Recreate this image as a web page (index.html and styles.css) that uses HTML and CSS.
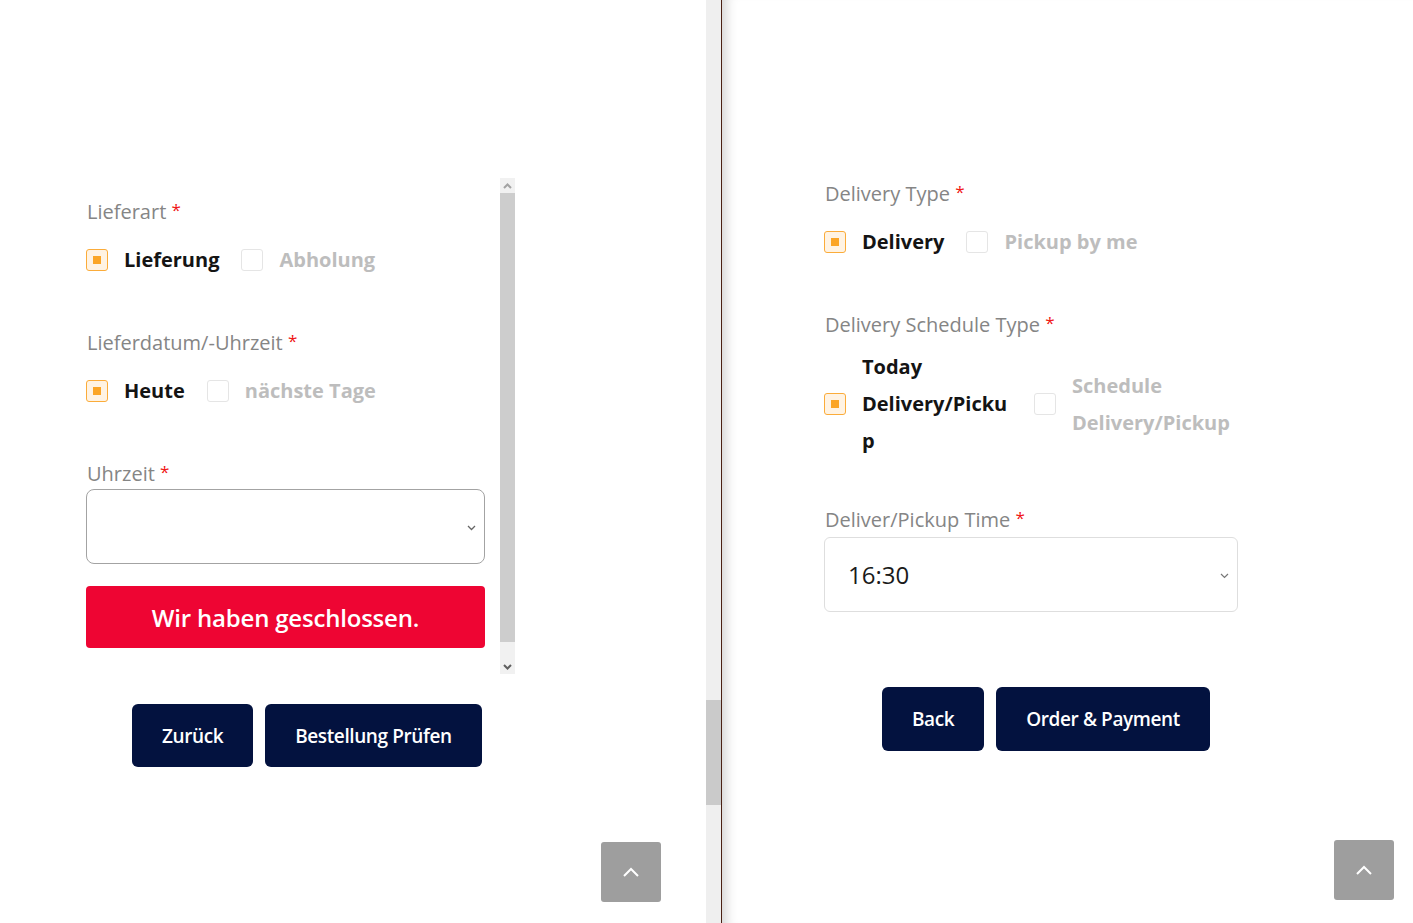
FILE: index.html
```html
<!DOCTYPE html>
<html lang="de">
<head>
    <meta charset="UTF-8">
    <title>Checkout</title>
    <link rel="stylesheet" href="styles.css">
</head>
<body>
    <div class="frame">
        <div class="pane pane-left">
            <div class="scrollbox">
                <div class="form">
                    <div class="field">
                        <div class="label">Lieferart <span class="req">*</span></div>
                        <div class="options">
                            <div class="option checked"><span class="box"></span><span class="text">Lieferung</span></div>
                            <div class="option"><span class="box"></span><span class="text">Abholung</span></div>
                        </div>
                    </div>
                    <div class="field">
                        <div class="label">Lieferdatum/-Uhrzeit <span class="req">*</span></div>
                        <div class="options">
                            <div class="option checked"><span class="box"></span><span class="text">Heute</span></div>
                            <div class="option"><span class="box"></span><span class="text">nächste Tage</span></div>
                        </div>
                    </div>
                    <div class="field field-select">
                        <div class="label">Uhrzeit <span class="req">*</span></div>
                        <div class="select select-dark">
                            <span class="value"></span>
                            <svg class="chev" width="9" height="6" viewBox="0 0 9 6"><path d="M1 1l3.5 3.5L8 1" fill="none" stroke="#666" stroke-width="1.3"/></svg>
                        </div>
                    </div>
                    <div class="closed">Wir haben geschlossen.</div>
                </div>
                <div class="vscroll">
                    <div class="arrow"><svg width="9" height="6" viewBox="0 0 9 6"><path d="M1 5l3.5-3.5L8 5" fill="none" stroke="#a3a3a3" stroke-width="2"/></svg></div>
                    <div class="thumb"></div>
                    <div class="track"></div>
                    <div class="arrow"><svg width="9" height="6" viewBox="0 0 9 6"><path d="M1 1l3.5 3.5L8 1" fill="none" stroke="#606060" stroke-width="2"/></svg></div>
                </div>
            </div>
            <div class="actions actions-left">
                <button class="btn">Zurück</button>
                <button class="btn">Bestellung Prüfen</button>
            </div>
            <button class="to-top to-top-left"><svg width="18" height="10" viewBox="0 0 18 10"><path d="M2 9l7-7 7 7" fill="none" stroke="#fff" stroke-width="2"/></svg></button>
        </div>

        <div class="page-scroll"><div class="page-thumb"></div></div>
        <div class="divider"></div>

        <div class="pane pane-right">
            <div class="form form-right">
                <div class="field">
                    <div class="label">Delivery Type <span class="req">*</span></div>
                    <div class="options">
                        <div class="option checked"><span class="box"></span><span class="text">Delivery</span></div>
                        <div class="option"><span class="box"></span><span class="text">Pickup by me</span></div>
                    </div>
                </div>
                <div class="field field-schedule">
                    <div class="label">Delivery Schedule Type <span class="req">*</span></div>
                    <div class="options options-tall">
                        <div class="option checked"><span class="box"></span><span class="text text-narrow">Today Delivery/Pickup</span></div>
                        <div class="option"><span class="box"></span><span class="text text-wide">Schedule Delivery/Pickup</span></div>
                    </div>
                </div>
                <div class="field field-select">
                    <div class="label">Deliver/Pickup Time <span class="req">*</span></div>
                    <div class="select select-light">
                        <span class="value">16:30</span>
                        <svg class="chev" width="9" height="6" viewBox="0 0 9 6"><path d="M1 1l3.5 3.5L8 1" fill="none" stroke="#777" stroke-width="1.2"/></svg>
                    </div>
                </div>
            </div>
            <div class="actions actions-right">
                <button class="btn">Back</button>
                <button class="btn">Order &amp; Payment</button>
            </div>
            <button class="to-top to-top-right"><svg width="18" height="10" viewBox="0 0 18 10"><path d="M2 9l7-7 7 7" fill="none" stroke="#fff" stroke-width="2"/></svg></button>
        </div>
    </div>
</body>
</html>
```

FILE: styles.css
```css
html, body {
    margin: 0;
    height: 100%;
    overflow: hidden;
}
body {
    font-family: 'Open Sans', 'Noto Sans', sans-serif;
    background: #fff;
    color: #111;
}
.frame {
    display: flex;
    height: 923px;
}
.pane {
    position: relative;
    height: 100%;
}
.pane-left {
    width: 706px;
    padding-top: 178px;
    box-sizing: border-box;
}
.pane-right {
    flex: 1;
    padding-top: 178px;
    box-sizing: border-box;
    box-shadow: inset 14px 0 12px -10px rgba(0,0,0,0.18);
}
.page-scroll {
    width: 15px;
    height: 100%;
    background: #efefef;
    position: relative;
}
.page-thumb {
    margin-top: 700px;
    height: 105px;
    background: #cacaca;
}
.divider {
    width: 1px;
    background: #4a2114;
}

/* left scroll box */
.scrollbox {
    display: flex;
    margin-left: 86px;
    width: 429px;
    height: 496px;
}
.form {
    width: 399px;
    padding-top: 18px;
}
.vscroll {
    margin-left: 15px;
    width: 15px;
    display: flex;
    flex-direction: column;
    background: #f1f1f1;
}
.vscroll .arrow {
    height: 15px;
    display: flex;
    align-items: center;
    justify-content: center;
}
.vscroll .thumb {
    height: 449px;
    background: #cdcdcd;
}
.vscroll .track {
    flex: 1;
}

/* fields */
.field {
    margin-bottom: 49px;
}
.label {
    font-size: 20px;
    line-height: 28px;
    color: #858585;
    margin-bottom: 15px;
    padding-left: 1px;
}
.req {
    color: #f01515;
    font-size: 17px;
    vertical-align: 3px;
}
.options {
    display: flex;
    align-items: center;
    height: 37px;
}
.option {
    display: flex;
    align-items: center;
    margin-right: 22px;
}
.box {
    width: 20px;
    height: 20px;
    border: 1px solid #e5e5e5;
    border-radius: 3px;
    margin-right: 16px;
    display: flex;
    align-items: center;
    justify-content: center;
    flex-shrink: 0;
}
.option.checked .box {
    border-color: #fbac3a;
    background: #fff3e3;
}
.option.checked .box::after {
    content: "";
    width: 8px;
    height: 8px;
    background: #fba526;
}
.text {
    font-size: 20px;
    font-weight: 700;
    line-height: 37px;
    color: #bdbdbd;
}
.option.checked .text {
    color: #141414;
}
.field-select .label {
    margin-bottom: 1px;
}
.select {
    height: 75px;
    box-sizing: border-box;
    display: flex;
    align-items: center;
    justify-content: space-between;
    padding: 0 8px 0 23px;
}
.select-dark {
    border: 1px solid #a3a3a3;
    border-radius: 8px;
}
.select-light {
    border: 1px solid #dedede;
    border-radius: 6px;
}
.select .value {
    font-size: 24px;
    color: #1a1a1a;
}
.select .chev {
    margin-top: 2px;
}
.field-select {
    margin-bottom: 22px;
}
.closed {
    height: 62px;
    border-radius: 4px;
    background: #ee0533;
    color: #fff;
    font-size: 24px;
    font-weight: 600;
    letter-spacing: -0.2px;
    display: flex;
    align-items: center;
    justify-content: center;
}

/* right form */
.form-right {
    margin-left: 102px;
    width: 414px;
    padding-top: 0;
}
.form-right .options {
    margin-top: 1px;
}
.form-right .field-schedule .label {
    margin-bottom: 9px;
}
.form-right .field-schedule {
    margin-bottom: 45px;
}
.options-tall {
    height: auto;
}
.text-narrow {
    width: 150px;
    overflow-wrap: anywhere;
}
.text-wide {
    width: 170px;
}
.form-right .field-select {
    margin-bottom: 75px;
}
.form-right .field-select .label {
    margin-bottom: 3px;
}

/* buttons */
.actions {
    display: flex;
    gap: 12px;
}
.actions-left {
    margin-top: 30px;
    margin-left: 132px;
}
.actions-right {
    margin-left: 160px;
}
.btn {
    font-family: inherit;
    background: #03123f;
    color: #fff;
    border: none;
    border-radius: 6px;
    font-size: 19px;
    font-weight: 600;
    letter-spacing: -0.4px;
    height: 63px;
    padding: 0 30px;
    cursor: pointer;
}
.actions-right .btn {
    height: 64px;
}
.to-top {
    position: absolute;
    width: 60px;
    height: 60px;
    border: none;
    border-radius: 3px;
    background: #9e9e9e;
    display: flex;
    align-items: center;
    justify-content: center;
    cursor: pointer;
}
.to-top-left {
    left: 601px;
    top: 842px;
}
.to-top-right {
    right: 19px;
    top: 840px;
}
```
